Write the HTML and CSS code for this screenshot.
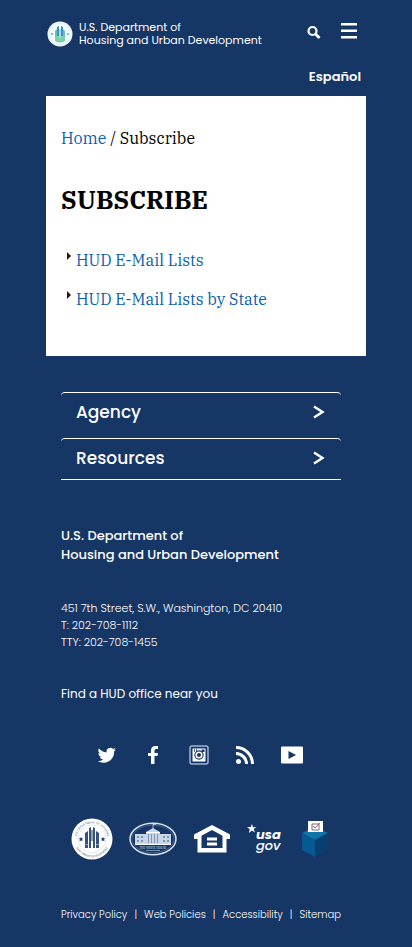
FILE: index.html
```html
<!DOCTYPE html>
<html lang="en">
<head>
<meta charset="utf-8">
<meta name="viewport" content="width=device-width, initial-scale=1">
<title>Subscribe | HUD</title>
<link rel="stylesheet" href="styles.css">
</head>
<body>
<div class="page">
  <header class="header">
    <div class="masthead">
      <a class="brand" href="#">
        <svg class="brand-seal" viewBox="0 0 26 26" aria-hidden="true">
          <circle cx="13" cy="13" r="12.5" fill="#f4fbff"/>
          <circle cx="13" cy="13" r="10.8" fill="none" stroke="#c5e2ee" stroke-width="1" stroke-dasharray="1 1"/>
          <path d="M8 20V10l2-2v12zM16 20V8l2 2v10z" fill="#62c4b4"/>
          <path d="M10 20V6l2-1v15zM14 20V5l2 1v14z" fill="#3d91bd"/>
          <path d="M8 15h10v5q-5 3-10 0z" fill="#79cfae"/>
          <path d="M12 8h2v9h-2z" fill="#a8dcec"/>
          <circle cx="5" cy="13" r="1" fill="#58aabe"/><circle cx="21" cy="13" r="1" fill="#58aabe"/>
        </svg>
        <span>U.S. Department of<br>Housing and Urban Development</span>
      </a>
      <div class="tools">
        <button class="tool" type="button" aria-label="Search">
          <svg width="14" height="14" viewBox="0 0 14 14" fill="none" stroke="#fff" stroke-width="2.2"><circle cx="5.500" cy="6" r="4"/><path d="M8.500 9l4 4" stroke-width="2.8"/></svg>
        </button>
        <button class="tool" type="button" aria-label="Menu">
          <svg width="16" height="16" viewBox="0 0 16 16" fill="#fff"><path d="M0 0h16v2.5H0zM0 6.5h16V9H0zM0 13h16v2.5H0z"/></svg>
        </button>
      </div>
    </div>
    <a class="language" href="#" lang="es">Español</a>
  </header>

  <main class="content">
    <nav class="crumbs" aria-label="Breadcrumb"><a href="#">Home</a> / Subscribe</nav>
    <h1>SUBSCRIBE</h1>
    <ul class="lists">
      <li><a href="#">HUD E-Mail Lists</a></li>
      <li><a href="#">HUD E-Mail Lists by State</a></li>
    </ul>
  </main>

  <footer class="footer">
    <div class="sections">
      <button class="section" type="button">Agency
        <svg width="12" height="14" viewBox="0 0 12 14" fill="none" stroke="#fff" stroke-width="2.4"><path d="M1 1.500L9.500 7L1 12.500"/></svg>
      </button>
      <button class="section" type="button">Resources
        <svg width="12" height="14" viewBox="0 0 12 14" fill="none" stroke="#fff" stroke-width="2.4"><path d="M1 1.500L9.500 7L1 12.500"/></svg>
      </button>
    </div>

    <p class="department">U.S. Department of<br>Housing and Urban Development</p>
    <address class="address">451 7th Street, S.W., Washington, DC 20410<br>T: 202-708-1112<br>TTY: 202-708-1455</address>
    <a class="office" href="#">Find a HUD office near you</a>

    <nav class="social" aria-label="Social media">
      <a href="#" aria-label="Twitter"><svg width="20" height="20" viewBox="-1 -1 26 26" fill="#fff"><path d="M23.6 4.9a9.700 9.700 0 0 1-2.800.8 4.900 4.900 0 0 0 2.100-2.700 9.700 9.700 0 0 1-3.100 1.200 4.860 4.860 0 0 0-8.300 4.400A13.800 13.800 0 0 1 1.500 3.500a4.860 4.860 0 0 0 1.500 6.500 4.800 4.800 0 0 1-2.200-.6 4.860 4.860 0 0 0 3.900 4.800 4.900 4.900 0 0 1-2.200.1 4.860 4.860 0 0 0 4.500 3.400A9.800 9.800 0 0 1 0 19.700a13.800 13.800 0 0 0 21.200-12.300 9.900 9.900 0 0 0 2.400-2.500z"/></svg></a>
      <a href="#" aria-label="Facebook"><svg width="20" height="20" viewBox="0 0 20 20" fill="#fff"><path d="M8 19v-8H5V8h3V5.500Q8 1 12.500 1H15v3h-2q-1.500 0-1.500 1.500V8H15l-.5 3h-3v8z"/></svg></a>
      <a href="#" aria-label="Instagram"><svg width="20" height="20" viewBox="0 0 20 20" fill="none"><rect x="1" y="1" width="18" height="18" rx="2" stroke="#9fb5d2" stroke-width="1.500"/><path d="M3.500 3.500h13v13h-13z" fill="#fff"/><path d="M5.500 4v3M7.500 4v3" stroke="#163666" stroke-width=".7"/><rect x="12.500" y="4.500" width="3" height="2.500" fill="#163666"/><circle cx="10" cy="10" r="4.700" fill="#163666"/><circle cx="10" cy="10" r="2.800" fill="#163666" stroke="#fff" stroke-width="1.600"/></svg></a>
      <a href="#" aria-label="RSS"><svg width="20" height="20" viewBox="0 0 20 20" fill="none" stroke="#fff" stroke-width="3"><circle cx="3.500" cy="16.500" r="2.500" fill="#fff" stroke="none"/><path d="M1 8.500A10.500 10.500 0 0 1 11.500 19M1 2.500A16.500 16.500 0 0 1 17.500 19"/></svg></a>
      <a href="#" aria-label="YouTube"><svg width="22" height="20" viewBox="0 0 22 20"><rect y="1.500" width="22" height="17" rx="1" fill="#fff"/><path d="M7.500 6l7.500 4-7.500 4z" fill="#163666"/></svg></a>
    </nav>

    <div class="partners">
      <a href="#" aria-label="Department of Housing and Urban Development seal">
        <svg width="42" height="42" viewBox="0 0 42 42">
          <defs>
            <path id="seal-top" d="M7.600 28.750A15.500 15.500 0 1 1 34.400 28.750"/>
            <path id="seal-base" d="M2.800 21a18.200 18.200 0 0 0 36.400 0"/>
          </defs>
          <circle cx="21" cy="21" r="20.500" fill="#fff"/>
          <circle cx="21" cy="21" r="14" fill="none" stroke="#d3dbe7" stroke-width=".6"/>
          <g class="seal-text">
            <text><textPath href="#seal-top" startOffset="50%">U.S. DEPARTMENT OF HOUSING</textPath></text>
            <text><textPath href="#seal-base" startOffset="50%">AND URBAN DEVELOPMENT</textPath></text>
          </g>
          <path d="M14 30V15l3-2v17zM18 30V10l2-1v21zM22 30V9l2 1v20zM25 30V13l3 2v15z" fill="#38527e"/>
          <path d="M20 12h2v11h-2zM14.500 26h3v1h-3zM25 26h3v1h-3z" fill="#8aa0c0"/>
          <path d="M10 18.800l.7 1.500 1.600.2-1.200 1.100.3 1.600-1.400-.8-1.400.8.3-1.600-1.200-1.100 1.600-.2zM32 18.800l.7 1.500 1.600.2-1.200 1.100.3 1.600-1.400-.8-1.400.8.3-1.600-1.200-1.100 1.600-.2z" fill="#233f70"/>
        </svg>
      </a>
      <a href="#" aria-label="The White House">
        <svg width="48" height="34" viewBox="0 0 48 34">
          <ellipse cx="24" cy="17" rx="23" ry="15.800" fill="#163666" stroke="#d9e3f0" stroke-width="1.500"/>
          <ellipse cx="24" cy="17" rx="21" ry="13.800" fill="none" stroke="#7089ae" stroke-width=".5"/>
          <path d="M6 12h11v-2l7-4 7 4v2h11v10H6z" fill="#c9d6e7"/>
          <path d="M24 2v5M24 2.500h3" stroke="#c9d6e7" stroke-width=".8"/>
          <path d="M8 14h2v2H8zm4 0h2v2h-2zm22 0h2v2h-2zm4 0h2v2h-2zM8 18h2v2H8zm4 0h2v2h-2zm22 0h2v2h-2zm4 0h2v2h-2zM19 12h1v9h-1zm3 0h1v9h-1zm3 0h1v9h-1zm3 0h1v9h-1z" fill="#7d94b6"/>
          <path d="M17 10.500h14M6 22.500h36" stroke="#fff" stroke-width="1"/>
          <text class="house-text" x="24" y="26.500">THE WHITE HOUSE</text>
          <path d="M17 28.500h14" stroke="#8fa4c2" stroke-width=".8"/>
        </svg>
      </a>
      <a href="#" aria-label="Equal Housing Opportunity">
        <svg width="38" height="28" viewBox="0 0 38 28"><path fill="#fff" fill-rule="evenodd" d="M19 0L1 9.500V14h3.500v13.500h29V14H37V9.500zM19 5l10.500 5.700V23h-21V10.700z"/><path d="M14 12.500h10v3H14zM14 17.500h10v3H14z" fill="#fff"/></svg>
      </a>
      <a href="#" aria-label="USA.gov">
        <svg width="38" height="34" viewBox="0 0 38 34" fill="#fff">
          <path d="M5 2l1 3.300 3.500-.3-2.800 2 1.300 3.500-3-2L1.800 11l1-3.700L0 5.300l3.600-.2z"/>
          <text class="usa-text" x="9" y="17">usa</text>
          <text class="gov-text" x="9" y="28">gov</text>
        </svg>
      </a>
      <a href="#" aria-label="Vote">
        <svg width="28" height="38" viewBox="0 0 28 38">
          <path d="M1 13l13-6 13 6-13 7z" fill="#1074aa"/>
          <path d="M1 13l13 7v17L1 30z" fill="#075a91"/>
          <path d="M27 13l-13 7v17l13-7z" fill="#073f70"/>
          <path d="M7 1h15v11H7z" fill="#fff"/>
          <path d="M11 4h7v6h-7z" fill="none" stroke="#6b7182"/>
          <path d="M12 6l2 2 5-5" fill="none" stroke="#ad5d52"/>
        </svg>
      </a>
    </div>

    <nav class="legal" aria-label="Legal">
      <a href="#">Privacy Policy</a><span>|</span><a href="#">Web Policies</a><span>|</span><a href="#">Accessibility</a><span>|</span><a href="#">Sitemap</a>
    </nav>
  </footer>
</div>
</body>
</html>
```
FILE: styles.css
```css
* { box-sizing: border-box; }
body {
  margin: 0;
  background: #163666;
  color: #fff;
  font-family: Poppins, Inter, sans-serif;
}
a { color: inherit; text-decoration: none; }
button { font: inherit; color: inherit; background: none; border: 0; padding: 0; cursor: pointer; }
svg { display: block; }
.page { padding: 0 46px; }

.header { padding: 21px 5px 0 1px; }
.masthead { display: flex; justify-content: space-between; align-items: flex-start; }
.brand { display: flex; align-items: center; gap: 6px; font-size: 11px; line-height: 13px; white-space: nowrap; }
.brand-seal { width: 26px; height: 26px; }
.tools { display: flex; align-items: flex-end; gap: 20px; padding: 2px 4px 0 0; }
.language { display: block; text-align: right; font-size: 13px; font-weight: 600; line-height: 20px; padding: 20px 0 9px; }

.content { background: #fff; color: #000; padding: 30px 15px 45px; font: 16px/24px "IBM Plex Serif", "Liberation Serif", serif; }
.content a { color: #0a5fb0; }
h1 { margin: 32px 0 30px; font-size: 25px; line-height: 36px; }
.lists { list-style: none; margin: 0; padding: 0 0 0 15px; display: grid; gap: 15px; }
.lists li { position: relative; }
.lists li::before {
  content: "";
  position: absolute;
  left: -9px;
  top: 4px;
  border: 4px solid transparent;
  border-left-color: #400b00;
  border-right: 0;
}

.footer { padding: 36px 25px 24px 15px; }
.sections { border-bottom: 1px solid #fff; }
.section {
  display: flex;
  width: 100%;
  justify-content: space-between;
  align-items: center;
  height: 41px;
  padding: 0 16px 3px 15px;
  border-top: 1px solid #fff;
  border-radius: 4px;
  font-size: 17px;
  font-weight: 500;
}
.section + .section { margin-top: 5px; }
.department { margin: 46px 0 0; font-size: 13px; font-weight: 500; line-height: 19px; }
.address { margin-top: 36px; font-size: 11px; font-style: normal; font-weight: 300; line-height: 17px; }
.office { display: block; margin-top: 33px; font-size: 12px; line-height: 20px; }
.social { display: flex; justify-content: space-between; margin-top: 41px; padding: 0 38px 0 36px; }
.partners { display: flex; justify-content: space-between; align-items: center; margin-top: 53px; padding: 0 12px 0 10px; }
.legal { display: flex; justify-content: space-between; margin-top: 47px; font-size: 10px; font-weight: 300; line-height: 16px; white-space: nowrap; }

.seal-text { font: 3px Poppins, Inter, sans-serif; fill: #526a91; text-anchor: middle; }
.house-text { font: 3px "Liberation Serif", serif; fill: #d6e1ef; text-anchor: middle; }
.usa-text { font: italic 700 13px Poppins, "Open Sans", sans-serif; }
.gov-text { font: italic 500 13px Poppins, "Open Sans", sans-serif; }
```
